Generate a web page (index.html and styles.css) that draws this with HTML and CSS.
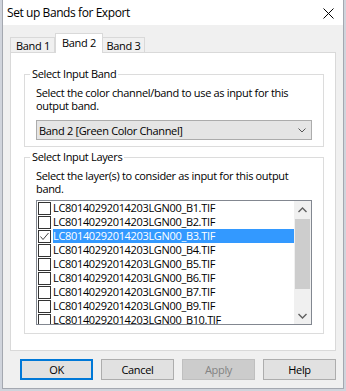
FILE: index.html
```html
<!DOCTYPE html>
<html>
<head>
<meta charset="utf-8">
<title>Set up Bands for Export</title>
<link rel="stylesheet" href="styles.css">
</head>
<body>
<div class="frame">
  <div class="window">
    <div class="titlebar">
      <span class="title">Set up Bands for Export</span>
      <svg class="close" width="11" height="11" viewBox="0 0 11 11"><path d="M0.5 0.5L10.5 10.5M10.5 0.5L0.5 10.5" stroke="#000" stroke-width="1" fill="none"/></svg>
    </div>
    <div class="client">
      <div class="tabs">
        <div class="tab t1">Band 1</div>
        <div class="tab active">Band 2</div>
        <div class="tab t3">Band 3</div>
      </div>
      <div class="panel">
        <fieldset class="group">
          <legend>Select Input Band</legend>
          <p class="desc">Select the color channel/band to use as input for this<br>output band.</p>
          <div class="combo">
            <span>Band 2 [Green Color Channel]</span>
            <svg class="chev" width="8" height="5" viewBox="0 0 8 5"><path d="M0.5 0.5L4 4L7.5 0.5" stroke="#555" stroke-width="1" fill="none"/></svg>
          </div>
        </fieldset>
        <fieldset class="group group-layers">
          <legend>Select Input Layers</legend>
          <p class="desc">Select the layer(s) to consider as input for this output<br>band.</p>
          <div class="listbox">
            <div class="items">
              <div class="item"><span class="cb"></span><span class="lbl">LC80140292014203LGN00_B1.TIF</span></div>
              <div class="item"><span class="cb"></span><span class="lbl">LC80140292014203LGN00_B2.TIF</span></div>
              <div class="item"><span class="cb checked"><svg width="11" height="11" viewBox="0 0 11 11"><path d="M1.5 5.5L4 8.5L9.5 2" stroke="#444" stroke-width="1" fill="none"/></svg></span><span class="lbl selected">LC80140292014203LGN00_B3.TIF</span></div>
              <div class="item"><span class="cb"></span><span class="lbl">LC80140292014203LGN00_B4.TIF</span></div>
              <div class="item"><span class="cb"></span><span class="lbl">LC80140292014203LGN00_B5.TIF</span></div>
              <div class="item"><span class="cb"></span><span class="lbl">LC80140292014203LGN00_B6.TIF</span></div>
              <div class="item"><span class="cb"></span><span class="lbl">LC80140292014203LGN00_B7.TIF</span></div>
              <div class="item"><span class="cb"></span><span class="lbl">LC80140292014203LGN00_B9.TIF</span></div>
              <div class="item"><span class="cb"></span><span class="lbl">LC80140292014203LGN00_B10.TIF</span></div>
            </div>
            <div class="scrollbar">
              <div class="sb-btn"><svg width="9" height="6" viewBox="0 0 9 6"><path d="M0.5 5L4.5 1L8.5 5" stroke="#606060" stroke-width="1.4" fill="none"/></svg></div>
              <div class="sb-track"><div class="sb-thumb"></div></div>
              <div class="sb-btn"><svg width="9" height="6" viewBox="0 0 9 6"><path d="M0.5 1L4.5 5L8.5 1" stroke="#606060" stroke-width="1.4" fill="none"/></svg></div>
            </div>
          </div>
        </fieldset>
      </div>
      <div class="buttons">
        <div class="btn default">OK</div>
        <div class="btn">Cancel</div>
        <div class="btn disabled">Apply</div>
        <div class="btn">Help</div>
      </div>
    </div>
  </div>
</div>
</body>
</html>
```
FILE: styles.css
```css
* { box-sizing: border-box; }
html, body { margin: 0; padding: 0; }
body {
  font-family: "Open Sans", "Noto Sans", sans-serif;
  font-size: 11px;
  letter-spacing: -0.33px;
  color: #000;
  background: #d0d4dc;
}
.frame {
  width: 346px;
  height: 391px;
  padding: 0 2px 2px 2px;
  background: #d0d4dc;
}
.window {
  height: 389px;
  border: 1px solid #a4a8b0;
  border-top: 0;
  background: #f0f0f0;
  display: flex;
  flex-direction: column;
}
.titlebar {
  height: 25px;
  background: #fff;
  display: flex;
  align-items: center;
  justify-content: space-between;
  padding: 0 9px 0 4px;
}
.title { font-size: 12px; line-height: 16px; letter-spacing: -0.42px; }
.close { display: block; margin-top: 1px; }
.client {
  flex: 1;
  padding: 8px 7px 0 7px;
}
.tabs {
  display: flex;
  height: 19px;
  position: relative;
  z-index: 1;
}
.tab {
  margin-top: 4px;
  height: 15px;
  border: 1px solid #d9d9d9;
  border-bottom: 0;
  background: #f0f0f0;
  line-height: 15px;
  text-align: center;
  white-space: nowrap;
}
.tab.t1 { width: 45px; padding-left: 1px; }
.tab.active {
  margin-top: 0;
  height: 20px;
  width: 48px;
  background: #fff;
  line-height: 17px;
}
.tab.t3 { width: 42px; border-left: 0; }
.panel {
  background: #fff;
  border: 1px solid #d9d9d9;
  padding: 14px 11px 16px 13px;
}
.group {
  margin: 0;
  min-width: 0;
  border: 1px solid #dcdcdc;
  padding: 5px 11px 6px 11px;
}
.group-layers { margin-top: 3px; padding-bottom: 8px; }
legend {
  line-height: 14px;
  padding: 0 2px;
  margin-left: -6px;
}
.desc {
  margin: 0;
  line-height: 13px;
}
.combo {
  margin-top: 8px;
  height: 20px;
  border: 1px solid #acacac;
  background: #e5e5e5;
  display: flex;
  align-items: center;
  justify-content: space-between;
  padding: 0 5px 0 2px;
}
.chev { display: block; }
.listbox {
  margin-top: 5px;
  height: 125px;
  border: 1px solid #828790;
  background: #fff;
  display: flex;
}
.items {
  flex: 1;
  overflow: hidden;
}
.item {
  height: 14px;
  display: flex;
  align-items: center;
}
.cb {
  width: 13px;
  height: 13px;
  margin-left: 1px;
  border: 1px solid #333;
  background: #fff;
  display: flex;
  align-items: center;
  justify-content: center;
}
.cb svg { display: block; }
.lbl {
  flex: 1;
  margin-left: 2px;
  height: 14px;
  line-height: 14px;
  white-space: nowrap;
}
.lbl.selected { background: #3399ff; color: #fff; }
.scrollbar {
  width: 17px;
  background: #f0f0f0;
  display: flex;
  flex-direction: column;
}
.sb-btn {
  height: 17px;
  display: flex;
  align-items: center;
  justify-content: center;
}
.sb-track { flex: 1; padding: 1px 1px; }
.sb-thumb { height: 70px; background: #cdcdcd; }
.buttons {
  margin-top: 8px;
  display: flex;
  justify-content: flex-end;
  gap: 8px;
}
.btn {
  width: 73px;
  height: 21px;
  border: 1px solid #adadad;
  background: #e1e1e1;
  text-align: center;
  line-height: 19px;
}
.btn.default { border: 2px solid #0078d7; line-height: 17px; }
.btn.disabled { background: #cccccc; border-color: #bfbfbf; color: #838383; }
```
